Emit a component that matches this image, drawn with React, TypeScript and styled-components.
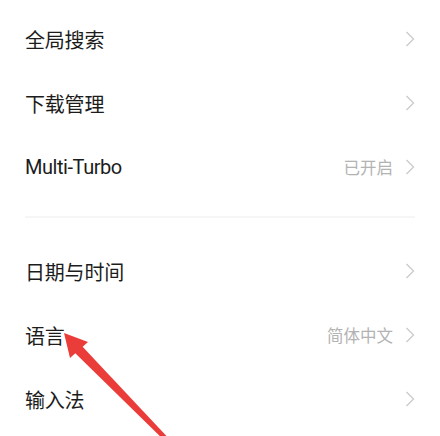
import React from "react";
import styled, { createGlobalStyle } from "styled-components";

const Global = createGlobalStyle`
  html, body { margin: 0; padding: 0; background: #ffffff; }
  body { font-family: Roboto, "Noto Sans CJK SC", sans-serif; }
`;

const Page = styled.div`
  position: relative;
  width: 440px;
  height: 436px;
  overflow: hidden;
  background: #ffffff;
  padding-top: 7px;
  box-sizing: border-box;
`;

const Group = styled.div`
  display: flex;
  flex-direction: column;
  padding: 0 25px;
`;

const Row = styled.div`
  display: flex;
  align-items: center;
  justify-content: space-between;
  height: 64px;
`;

const Title = styled.span<{ $latin?: boolean }>`
  font-size: 20px;
  color: #1c1c1c;
  font-family: Roboto, "Noto Sans CJK SC", sans-serif;
  letter-spacing: ${(p) => (p.$latin ? "-0.45px" : "-0.2px")};
`;

const Right = styled.div`
  display: flex;
  align-items: center;
  gap: 12px;
`;

const Value = styled.span`
  font-size: 16.5px;
  color: #b3b3b3;
  font-family: "Noto Sans CJK SC", sans-serif;
`;

const Divider = styled.div`
  height: 2px;
  margin: 17px 25px 21px;
  background: #f6f6f6;
`;

const Overlay = styled.svg`
  position: absolute;
  left: 0;
  top: 0;
  pointer-events: none;
`;

const Chevron = () => (
  <svg width="10" height="16" viewBox="0 0 10 16">
    <polyline points="1.5,1 8.5,8 1.5,15" fill="none" stroke="#cacaca" strokeWidth="1.3" />
  </svg>
);

type Item = { title: string; value?: string; latin?: boolean };

const groupA: Item[] = [
  { title: "全局搜索" },
  { title: "下载管理" },
  { title: "Multi-Turbo", value: "已开启", latin: true },
];
const groupB: Item[] = [
  { title: "日期与时间" },
  { title: "语言", value: "简体中文" },
  { title: "输入法" },
];

const Rows = ({ items }: { items: Item[] }) => (
  <Group>
    {items.map((it) => (
      <Row key={it.title}>
        <Title $latin={it.latin}>{it.title}</Title>
        <Right>
          {it.value && <Value>{it.value}</Value>}
          <Chevron />
        </Right>
      </Row>
    ))}
  </Group>
);

export default function App() {
  return (
    <>
      <Global />
      <Page>
        <Rows items={groupA} />
        <Divider />
        <Rows items={groupB} />
        <Overlay width="440" height="436" viewBox="0 0 440 436">
          <polygon points="80.5,344.5 73.5,351.5 170.4,446.4 173.6,443.6" fill="#ea3c39" />
          <polygon points="64,333 88,342 70,358" fill="#ea3c39" />
        </Overlay>
      </Page>
    </>
  );
}
